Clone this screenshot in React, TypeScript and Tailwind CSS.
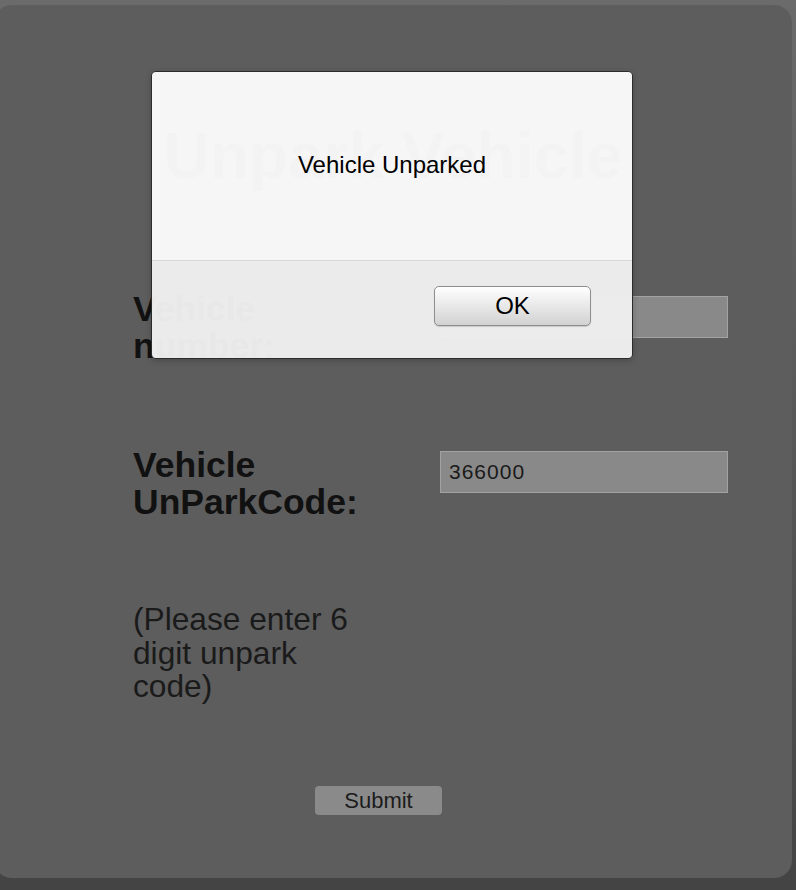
export default function App() {
  return (
    <div className="relative w-[796px] h-[890px] overflow-hidden bg-linear-to-b from-[#6b6b6b] to-[#444444] pt-[5px] font-['Liberation_Sans',Arial,sans-serif]">
      <div className="ml-[-6px] w-[798px] h-[873px] rounded-[18px] bg-[#5d5d5d]">
        <h1 className="pt-[119px] text-center text-[64px] leading-[64px] font-bold text-[#1a1a1a]">
          Unpark Vehicle
        </h1>

        <form className="pl-[139px] mt-[103px] flex flex-col">
          <div className="grid grid-cols-[307px_288px] items-start">
            <label className="w-[250px] text-[35.5px] leading-[37px] font-bold text-[#111]">
              Vehicle number:
            </label>
            <input
              className="mt-[5px] w-[288px] h-[42px] bg-[#898989] border border-[#a2a2a2] px-[8px] text-[21px] tracking-[1px] text-[#1a1a1a] outline-none"
              defaultValue=""
            />
          </div>

          <div className="mt-[82px] grid grid-cols-[307px_288px] items-start">
            <label className="w-[250px] text-[35.5px] leading-[37px] font-bold text-[#111]">
              Vehicle UnParkCode:
            </label>
            <input
              className="mt-[4px] w-[288px] h-[42px] bg-[#898989] border border-[#a2a2a2] px-[8px] text-[21px] tracking-[1px] text-[#1a1a1a] outline-none"
              defaultValue="366000"
            />
          </div>

          <p className="mt-[82px] w-[250px] text-[31.7px] leading-[33.5px] text-[#1a1a1a]">
            (Please enter 6 digit unpark code)
          </p>

          <button
            type="button"
            className="mt-[82px] ml-[182px] w-[127px] h-[29px] rounded-[4px] bg-[#8a8a8a] text-[22px] leading-[29px] text-[#1c1c1c]"
          >
            Submit
          </button>
        </form>
      </div>

      {/* alert dialog */}
      <div className="absolute left-[151px] top-[71px] w-[482px] h-[288px] rounded-[5px] border border-[#2c2c2c] overflow-hidden flex flex-col shadow-[0_2px_6px_rgba(0,0,0,0.2)]">
        <div className="h-[189px] shrink-0 bg-[#fbfbfb]/97 border-b border-[#d6d6d6] pt-[81px] text-center text-[24px] leading-[24px] text-black">
          Vehicle Unparked
        </div>
        <div className="flex-1 bg-[#efefef]/97 flex justify-end pr-[41px] pt-[25px]">
          <button
            type="button"
            className="w-[157px] h-[40px] rounded-[5px] border border-[#8e8e8e] bg-linear-to-b from-white to-[#d2d2d2] text-[24px] leading-[38px] text-black shadow-[0_1px_1px_rgba(0,0,0,0.15)]"
          >
            OK
          </button>
        </div>
      </div>
    </div>
  );
}
